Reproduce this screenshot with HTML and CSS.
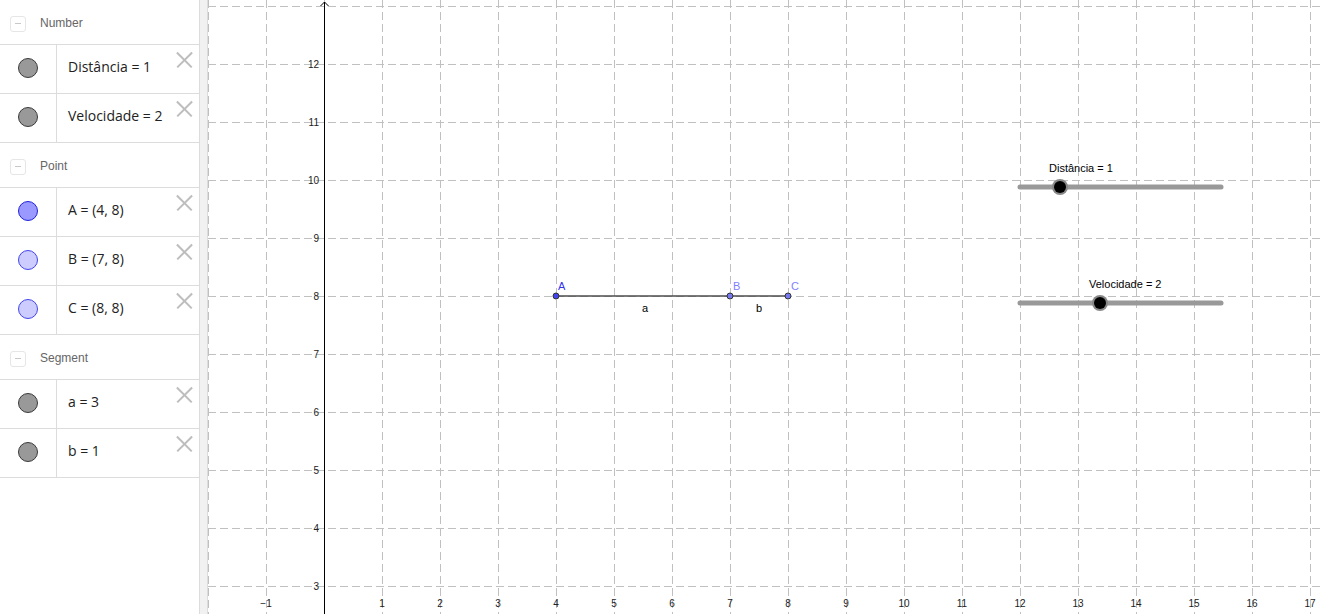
FILE: index.html
```html
<!DOCTYPE html>
<html>
<head>
<meta charset="utf-8">
<link rel="stylesheet" href="styles.css">
</head>
<body>
<div class="app">
  <div class="panel">
    <div class="group">
      <div class="ghead"><span class="minus"></span><span class="gname">Number</span></div>
      <div class="item">
        <div class="mark"><span class="dot gray"></span></div>
        <div class="val">Distância = 1</div>
        <span class="del"></span>
      </div>
      <div class="item">
        <div class="mark"><span class="dot gray"></span></div>
        <div class="val">Velocidade = 2</div>
        <span class="del"></span>
      </div>
    </div>
    <div class="group">
      <div class="ghead"><span class="minus"></span><span class="gname">Point</span></div>
      <div class="item">
        <div class="mark"><span class="dot blue"></span></div>
        <div class="val">A = (4, 8)</div>
        <span class="del"></span>
      </div>
      <div class="item">
        <div class="mark"><span class="dot lblue"></span></div>
        <div class="val">B = (7, 8)</div>
        <span class="del"></span>
      </div>
      <div class="item">
        <div class="mark"><span class="dot lblue"></span></div>
        <div class="val">C = (8, 8)</div>
        <span class="del"></span>
      </div>
    </div>
    <div class="group">
      <div class="ghead"><span class="minus"></span><span class="gname">Segment</span></div>
      <div class="item">
        <div class="mark"><span class="dot gray"></span></div>
        <div class="val">a = 3</div>
        <span class="del"></span>
      </div>
      <div class="item">
        <div class="mark"><span class="dot gray"></span></div>
        <div class="val">b = 1</div>
        <span class="del"></span>
      </div>
    </div>
  </div>
  <div class="divider"></div>
  <div class="canvas">
    <svg class="graph" width="1112" height="614" viewBox="0 0 1112 614" xmlns="http://www.w3.org/2000/svg">
      <g class="grid" id="grid"></g>
      <g class="axis">
        <line x1="116.5" y1="2" x2="116.5" y2="614" />
        <polyline points="112.5,6 116.5,2 120.5,6" fill="none"/>
      </g>
      <g class="ylabels" id="ylabels"></g>
      <g class="xlabels" id="xlabels"></g>
      <g class="seg">
        <line x1="348" y1="296" x2="580" y2="296" />
        <circle class="pA" cx="348" cy="296" r="3" />
        <circle class="pB" cx="522" cy="296" r="3" />
        <circle class="pB" cx="580" cy="296" r="3" />
        <text class="lA" x="350" y="290">A</text>
        <text class="lB" x="525" y="290">B</text>
        <text class="lB" x="583" y="290">C</text>
        <text class="lseg" x="434" y="312">a</text>
        <text class="lseg" x="548" y="312">b</text>
      </g>
      <g class="slider">
        <text class="slabel" x="841" y="172">Distância = 1</text>
        <line class="track" x1="812" y1="187" x2="1013" y2="187" />
        <circle class="ring" cx="852" cy="187" r="8" />
        <circle class="knob" cx="852" cy="187" r="6" />
        <text class="slabel" x="881" y="288">Velocidade = 2</text>
        <line class="track" x1="812" y1="303" x2="1013" y2="303" />
        <circle class="ring" cx="892" cy="303" r="8" />
        <circle class="knob" cx="892" cy="303" r="6" />
      </g>
    </svg>
  </div>
</div>
<script src="script.js"></script>
</body>
</html>
```

FILE: script.js
```js
(function () {
  var ns = "http://www.w3.org/2000/svg";
  var grid = document.getElementById("grid");
  var yl = document.getElementById("ylabels");
  var xl = document.getElementById("xlabels");
  function el(tag, attrs, parent, txt) {
    var e = document.createElementNS(ns, tag);
    for (var k in attrs) e.setAttribute(k, attrs[k]);
    if (txt !== undefined) e.textContent = txt;
    parent.appendChild(e);
    return e;
  }
  // vertical grid lines: x = 58k, value k-2
  for (var k = 0; k <= 19; k++) {
    var x = 58 * k + 0.5;
    el("line", { x1: x, y1: 0, x2: x, y2: 614 }, grid);
    var v = k - 2;
    if (k > 0 && v !== 0 && v <= 17) {
      el("text", { x: 58 * k, y: 607 }, xl, v < 0 ? "\u2212" + (-v) : String(v));
    }
  }
  // horizontal grid lines: y = 6 + 58j, value 13 - j
  for (var j = 0; j <= 10; j++) {
    var y = 6 + 58 * j + 0.5;
    el("line", { x1: 0, y1: y, x2: 1112, y2: y }, grid);
    var val = 13 - j;
    if (val <= 12) {
      el("text", { x: 111, y: 6 + 58 * j + 4 }, yl, String(val));
    }
  }
})();
```

FILE: styles.css
```css
html, body {
  margin: 0;
  padding: 0;
  background: #fff;
  overflow: hidden;
}
.app {
  display: flex;
  width: 1320px;
  height: 614px;
  font-family: "Open Sans", "Liberation Sans", sans-serif;
}
.panel {
  width: 200px;
  flex: none;
  box-sizing: border-box;
  border-right: 1px solid #dcdcdc;
  background: #fff;
}
.ghead {
  height: 44px;
  border-bottom: 1px solid #dcdcdc;
  display: flex;
  align-items: center;
  padding-left: 10px;
  box-sizing: border-box;
  padding-top: 4px;
  height: 45px;
}
.minus {
  width: 14px;
  height: 14px;
  border: 1px solid #e6e6e6;
  border-radius: 3px;
  position: relative;
}
.minus::after {
  content: "";
  position: absolute;
  left: 4px;
  right: 4px;
  top: 6px;
  height: 1px;
  background: #c8c8c8;
}
.gname {
  margin-left: 14px;
  font-size: 12px;
  color: #666;
  font-family: "Liberation Sans", sans-serif;
  margin-top: -2px;
}
.item {
  height: 48px;
  border-bottom: 1px solid #dcdcdc;
  display: flex;
  position: relative;
}
.mark {
  width: 56px;
  flex: none;
  border-right: 1px solid #dcdcdc;
  display: flex;
  align-items: center;
  justify-content: center;
}
.dot {
  width: 18px;
  height: 18px;
  border-radius: 50%;
  border: 1px solid #333;
  margin-top: -3px;
}
.dot.gray { background: #999; border-color: #3a3a3a; }
.dot.blue { background: #9999ff; border-color: #2222dd; }
.dot.lblue { background: #ccccff; border-color: #4444ee; }
.val {
  display: flex;
  align-items: center;
  padding-left: 11px;
  font-size: 14px;
  color: #222;
  padding-bottom: 6px;
}
.del {
  position: absolute;
  right: 7px;
  top: 7px;
  width: 16px;
  height: 16px;
}
.del::before, .del::after {
  content: "";
  position: absolute;
  left: -2px;
  top: 7px;
  width: 21px;
  height: 1.5px;
  background: #bdbdbd;
  transform: rotate(45deg);
}
.del::after { transform: rotate(-45deg); }
.divider {
  width: 7px;
  flex: none;
  background: #f1f1f1;
  border-right: 1px solid #dcdcdc;
}
.canvas {
  flex: 1;
  position: relative;
  overflow: hidden;
}
.graph { display: block; }
.grid line {
  stroke: #c0c0c0;
  stroke-width: 1;
  stroke-dasharray: 8 4;
}
.axis line, .axis polyline {
  stroke: #000;
  stroke-width: 1;
}
.ylabels text {
  font-family: "Liberation Sans", sans-serif;
  font-size: 10px;
  fill: #222;
  text-anchor: end;
}
.xlabels text {
  font-family: "Liberation Sans", sans-serif;
  font-size: 10px;
  fill: #222;
  text-anchor: middle;
}
.seg line {
  stroke: #4d4d4d;
  stroke-width: 1.5;
}
.seg circle { stroke: #333; stroke-width: 1; }
.pA { fill: #4444ee; }
.pB { fill: #7777ee; }
.seg text {
  font-family: "Liberation Sans", sans-serif;
  font-size: 11px;
}
.lA { fill: #3333ee; }
.lB { fill: #8080ff; }
.lseg { fill: #000; }
.track {
  stroke: #999;
  stroke-width: 5;
  stroke-linecap: round;
}
.ring { fill: #888; }
.knob { fill: #000; }
.slabel {
  font-family: "Liberation Sans", sans-serif;
  font-size: 11px;
  fill: #000;
}
```
